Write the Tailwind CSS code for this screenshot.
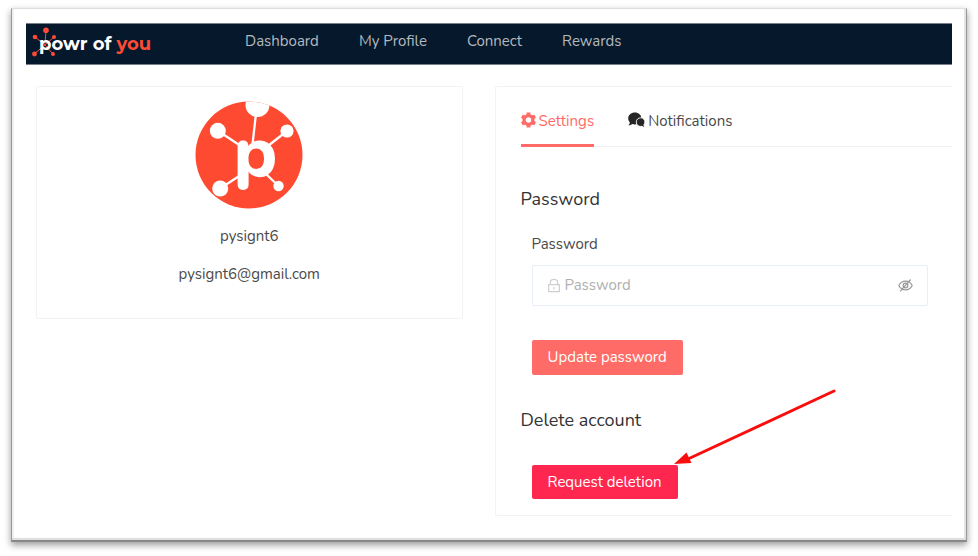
<!DOCTYPE html>
<html lang="en">
<head>
<meta charset="utf-8">
<meta name="viewport" content="width=device-width, initial-scale=1">
<title>Powr of You – Settings</title>
<script src="https://cdn.jsdelivr.net/npm/@tailwindcss/browser@4"></script>
</head>
<body class="bg-white px-[11px] pt-2 pb-3 font-['Nunito','Lato',sans-serif] text-[15px] text-[#4a4a4a]">
<div class="border border-t-[#dedede] border-x-[#999] border-b-2 border-b-[#888] bg-white pl-[14px] pr-[14px] pt-[14px] pb-6 shadow-[0_3px_7px_rgba(0,0,0,0.4),inset_0_-2px_1px_#ddd,inset_-2px_0_1px_#e4e4e4,inset_2px_0_1px_#f0f0f0]">
  <header class="flex h-[42px] items-center border-y border-[#76808c] bg-[#06182c]">
    <a href="#" class="relative block w-[219px] pl-[13px] font-['Montserrat','Lato',sans-serif] text-lg leading-6 font-bold text-white">
      <svg class="absolute -top-[6px] left-[4px]" width="30" height="34" viewBox="30 25 30 34" fill="#ff4b36" stroke="#ff4b36" aria-hidden="true">
        <path d="M46 29L45 44M35 36L45 44M54 36L45 44M34 53L45 44M53 53L45 44" fill="none" stroke-width="1"/>
        <g stroke="none"><circle cx="46" cy="29.300" r="2.800"/><circle cx="35" cy="36" r="2.300"/><circle cx="54" cy="36" r="2"/><circle cx="34.500" cy="53" r="2.400"/><circle cx="53" cy="53" r="2"/></g>
      </svg>
      <span class="relative">powr of <span class="text-[#ff4b36]">you</span></span>
    </a>
    <nav class="flex gap-10 pb-[6px] text-[#b4b9be]">
      <a href="#">Dashboard</a>
      <a href="#">My Profile</a>
      <a href="#">Connect</a>
      <a href="#">Rewards</a>
    </nav>
  </header>
  <main class="mt-[21px] grid grid-cols-[427fr_458fr] items-start gap-8 pl-[10px]">
    <section class="flex flex-col items-center rounded-xs border border-[#f3f3f3] pt-[14px] pb-8">
      <svg width="108" height="108" viewBox="195.500 101.500 108 108" role="img" aria-label="Powr of You avatar">
        <defs><clipPath id="disc"><circle cx="249.500" cy="155.500" r="53.500"/></clipPath></defs>
        <g clip-path="url(#disc)">
          <rect x="195" y="101" width="110" height="110" fill="#ff4a32"/>
          <path d="M257.500 105L253 145M218 131L242 147M287.500 131.500L269 146M220.500 189L242 175M279 186.500L266 174" stroke="#fff" stroke-width="2.300"/>
          <g fill="#fff"><circle cx="258" cy="105.500" r="12"/><circle cx="218.300" cy="131.300" r="8"/><circle cx="287.500" cy="131.500" r="6.600"/><circle cx="220.700" cy="189" r="8"/><circle cx="279" cy="186.500" r="5.200"/></g>
          <text x="234" y="176" font-family="Nunito, sans-serif" font-weight="800" font-size="72" fill="#fff">p</text>
        </g>
      </svg>
      <p class="mt-[15px] leading-6">pysignt6</p>
      <p class="mt-[14px] leading-6">pysignt6@gmail.com</p>
    </section>
    <section class="rounded-l-xs border border-r-0 border-[#f3f3f3] pb-4 pl-[25px]">
      <div class="flex h-[60px] gap-[34px] border-b border-[#f0f0f0]" role="tablist">
        <button type="button" role="tab" aria-selected="true" class="-mb-px flex items-center gap-[3px] border-b-3 border-[#ff6b66] pt-[11px] text-[#ff6b66]">
          <svg class="mb-[2px]" width="15" height="16" viewBox="0 0 15 16" fill="none" stroke="currentColor" aria-hidden="true"><circle cx="7.500" cy="8" r="4.400" stroke-width="3.400"/><path d="M7.500 .4V3M7.500 13v2.600M.9 4.200l2.300 1.300M11.800 10.500l2.300 1.300M.9 11.800l2.300-1.300M11.800 5.500l2.300-1.300" stroke-width="3.800"/></svg>
          Settings</button>
        <button type="button" role="tab" aria-selected="false" class="flex items-center gap-[3px] pt-[11px] pb-[2px]">
          <svg class="mb-[2px]" width="17" height="16" viewBox="0 0 17 16" fill="#262626" aria-hidden="true"><path d="M6.800.4c3.700 0 6.600 2.500 6.600 5.900S10.500 12.400 6.800 12.400c-.9 0-1.700-.1-2.500-.4-.9.700-2.300 1.300-3.800 1.300.8-.8 1.300-1.800 1.400-2.700C.8 9.400.2 8 .2 6.300.2 2.900 3.100.4 6.800.4z"/><path d="M12.700 5.800c2.400 0 4.200 1.800 4.200 4.100 0 1.100-.4 2-1 2.800.1.900.5 1.700 1 2.600-1.100 0-2.200-.4-3-1-3.200.6-5.600-1.300-5.600-4.300 0-2.400 1.900-4.200 4.400-4.200z" stroke="#fff" stroke-width=".900"/></svg>
          Notifications</button>
      </div>
      <form class="pr-[14px]">
        <h2 class="mt-10 text-lg leading-6 text-[#333]">Password</h2>
        <div class="pr-[10px] pl-[11px]">
          <label for="password" class="mt-[21px] block leading-6">Password</label>
          <div class="mt-[9px] flex h-[41px] items-center rounded-xs border border-[#e8eef5] pr-[14px] pl-[14px]">
            <svg class="shrink-0" width="14" height="15" viewBox="0 0 14 15" fill="none" stroke="#cfcfcf" stroke-width="1.200" aria-hidden="true"><path d="M1.600 6.600h10.800v7H1.600zM3.400 6.500V4.200Q3.400 1.300 7 1.300T10.600 4.200V6.500M7 9v2.500"/></svg>
            <input id="password" type="password" placeholder="Password" class="ml-1 min-w-0 flex-1 outline-none placeholder:text-[#b0b0b0]">
            <button type="button" aria-label="Show password">
              <svg width="15" height="15" viewBox="0 0 15 15" fill="none" stroke="#999" stroke-width="1.200" aria-hidden="true"><path d="M.8 7.500C3.700 1.700 11.300 1.700 14.200 7.500 11.300 13.300 3.700 13.300.8 7.500zM2.200 13.300L12.600 1.500"/><circle cx="7.500" cy="7.500" r="2.400"/></svg>
            </button>
          </div>
          <button type="submit" class="mt-[34px] block h-[35px] rounded-xs bg-[#ff6b66] px-4 text-white">Update password</button>
        </div>
      </form>
      <h2 class="mt-[33px] text-lg leading-6 text-[#333]">Delete account</h2>
      <div class="relative mt-[33px] ml-[11px] w-fit">
        <button type="button" class="block h-[34px] rounded-xs bg-[#ff2750] px-4 text-white">Request deletion</button>
        <svg class="pointer-events-none absolute bottom-full left-full -mb-px -ml-1" width="164" height="78" viewBox="0 0 164 78" aria-hidden="true"><path d="M160 3L14 71" stroke="#fb0d0d" stroke-width="3" stroke-linecap="round"/><path d="M0 76L12.500 64.500L17.500 75z" fill="#fb0d0d"/></svg>
      </div>
    </section>
  </main>
</div>
</body>
</html>
